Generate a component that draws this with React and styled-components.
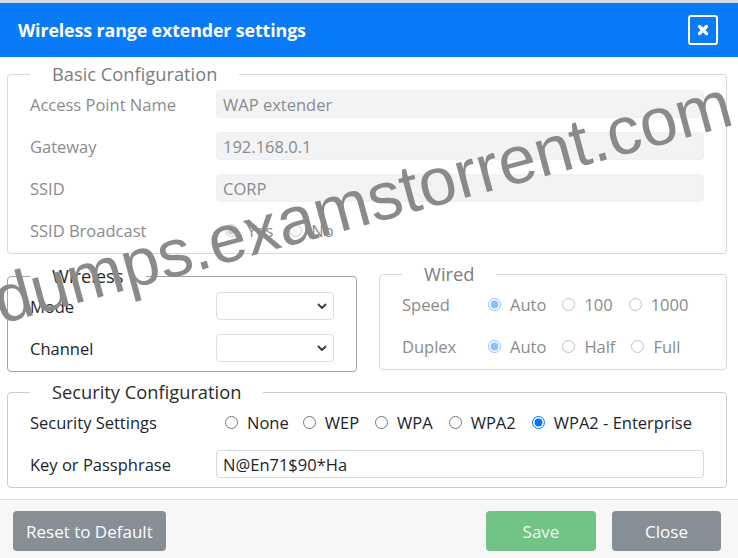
import React from 'react';
import styled, { createGlobalStyle } from 'styled-components';

const GlobalStyle = createGlobalStyle`
  html, body {
    margin: 0;
    padding: 0;
    background: #ffffff;
    overflow: hidden;
  }
  * {
    box-sizing: border-box;
  }
`;

const muted = '#8b8b8b';
const ink = '#212529';

function App() {
  return (
    <Page>
      <GlobalStyle />
      <TopStrip />
      <Header>
        <Title>Wireless range extender settings</Title>
        <CloseIcon aria-label="Close">
          <svg width="12" height="12" viewBox="0 0 12 12">
            <path
              d="M2.5 2.5 L9.5 9.5 M9.5 2.5 L2.5 9.5"
              stroke="#fff"
              strokeWidth="3.2"
              strokeLinecap="round"
            />
          </svg>
        </CloseIcon>
      </Header>

      <Body>
        <Fieldset disabled $border="#d8d8d8">
          <Legend $muted>Basic Configuration</Legend>
          <Row $labelWidth={186}>
            <Label $muted>Access Point Name</Label>
            <TextInput disabled defaultValue="WAP extender" />
          </Row>
          <Row $labelWidth={186}>
            <Label $muted>Gateway</Label>
            <TextInput disabled defaultValue="192.168.0.1" />
          </Row>
          <Row $labelWidth={186}>
            <Label $muted>SSID</Label>
            <TextInput disabled defaultValue="CORP" />
          </Row>
          <Row $labelWidth={186}>
            <Label $muted>SSID Broadcast</Label>
            <Options>
              <Option $muted>
                <Radio type="radio" name="broadcast" defaultChecked disabled />
                Yes
              </Option>
              <Option $muted>
                <Radio type="radio" name="broadcast" disabled />
                No
              </Option>
            </Options>
          </Row>
        </Fieldset>

        <Columns>
          <Fieldset $border="#a3a3a3">
            <Legend>Wireless</Legend>
            <Row $labelWidth={186}>
              <Label>Mode</Label>
              <Dropdown />
            </Row>
            <Row $labelWidth={186}>
              <Label>Channel</Label>
              <Dropdown />
            </Row>
          </Fieldset>

          <Fieldset $border="#d8d8d8" $lift>
            <Legend $muted>Wired</Legend>
            <Row $labelWidth={77}>
              <Label $muted>Speed</Label>
              <Options>
                <Option $muted>
                  <Radio type="radio" name="speed" defaultChecked $faded />
                  Auto
                </Option>
                <Option $muted>
                  <Radio type="radio" name="speed" $faded />
                  100
                </Option>
                <Option $muted>
                  <Radio type="radio" name="speed" $faded />
                  1000
                </Option>
              </Options>
            </Row>
            <Row $labelWidth={77}>
              <Label $muted>Duplex</Label>
              <Options>
                <Option $muted>
                  <Radio type="radio" name="duplex" defaultChecked $faded />
                  Auto
                </Option>
                <Option $muted>
                  <Radio type="radio" name="duplex" $faded />
                  Half
                </Option>
                <Option $muted>
                  <Radio type="radio" name="duplex" $faded />
                  Full
                </Option>
              </Options>
            </Row>
          </Fieldset>
        </Columns>

        <Fieldset $border="#cdcdcd" $gapAbove={11}>
          <Legend>Security Configuration</Legend>
          <Row $labelWidth={186}>
            <Label>Security Settings</Label>
            <Options>
              {['None', 'WEP', 'WPA', 'WPA2', 'WPA2 - Enterprise'].map((opt) => (
                <Option key={opt} $tight={opt === 'None'}>
                  <Radio
                    type="radio"
                    name="security"
                    defaultChecked={opt === 'WPA2 - Enterprise'}
                  />
                  {opt}
                </Option>
              ))}
            </Options>
          </Row>
          <Row $labelWidth={186}>
            <Label>Key or Passphrase</Label>
            <TextInput defaultValue="N@En71$90*Ha" />
          </Row>
        </Fieldset>
      </Body>

      <Footer>
        <Button $bg="#868e96">Reset to Default</Button>
        <FooterRight>
          <Button $bg="#71c386" $width={110} disabled>
            Save
          </Button>
          <Button $bg="#868e96" $width={109}>
            Close
          </Button>
        </FooterRight>
      </Footer>

      <Watermark>dumps.examstorrent.com</Watermark>
    </Page>
  );
}

function Dropdown() {
  return (
    <SelectWrap>
      <Select defaultValue="">
        <option value="" />
      </Select>
      <Chevron width="10" height="7" viewBox="0 0 10 7">
        <path
          d="M1.5 1.5 L5 5 L8.5 1.5"
          fill="none"
          stroke="#343a40"
          strokeWidth="1.8"
          strokeLinecap="round"
          strokeLinejoin="round"
        />
      </Chevron>
    </SelectWrap>
  );
}

const Page = styled.div`
  position: relative;
  width: 738px;
  height: 558px;
  display: flex;
  flex-direction: column;
  font-family: 'Open Sans', 'Noto Sans', sans-serif;
  font-size: 16.5px;
  color: ${ink};
  background: #fff;
  overflow: hidden;
`;

const TopStrip = styled.div`
  height: 3px;
  background: #d3dbe3;
`;

const Header = styled.header`
  height: 54px;
  background: #0a7bf8;
  display: flex;
  align-items: center;
  justify-content: space-between;
  padding: 0 20px 0 18px;
`;

const Title = styled.h1`
  margin: 0;
  font-size: 17.8px;
  font-weight: 700;
  color: #fff;
  letter-spacing: -0.1px;
`;

const CloseIcon = styled.button`
  width: 30px;
  height: 30px;
  padding: 0;
  border: 2px solid #fff;
  border-radius: 3px;
  background: transparent;
  display: flex;
  align-items: center;
  justify-content: center;
  cursor: pointer;
`;

const Body = styled.main`
  flex: 1;
  padding: 8px 11px 0 7px;
  display: flex;
  flex-direction: column;
  gap: 13px;
`;

const Fieldset = styled.fieldset`
  margin: ${({ $lift }) => ($lift ? '-2px 0 0' : '0')};
  margin-top: ${({ $gapAbove }) => ($gapAbove != null ? `${$gapAbove - 13}px` : undefined)};
  padding: 0 22px 2px;
  min-width: 0;
  border: 1px solid ${({ $border }) => $border};
  border-radius: 4px;
`;

const Legend = styled.legend`
  padding: 0 22px;
  font-size: 18.3px;
  line-height: 18px;
  color: ${({ $muted }) => ($muted ? '#7d7d7d' : '#2b2b2b')};
`;

const Columns = styled.div`
  display: grid;
  grid-template-columns: 350px 348px;
  gap: 22px;
  align-items: start;
`;

const Row = styled.div`
  display: grid;
  grid-template-columns: ${({ $labelWidth }) => $labelWidth}px 1fr;
  align-items: center;
  height: 42px;
`;

const Label = styled.span`
  color: ${({ $muted }) => ($muted ? muted : ink)};
  white-space: nowrap;
`;

const TextInput = styled.input`
  height: 28px;
  width: 100%;
  padding: 0 6px;
  border: 1px solid ${({ disabled }) => (disabled ? '#eef0f2' : '#d9dcdf')};
  border-radius: 4px;
  background: ${({ disabled }) => (disabled ? '#f2f3f5' : '#fff')};
  font: inherit;
  color: ${({ disabled }) => (disabled ? muted : ink)};
  outline: none;
`;

const SelectWrap = styled.div`
  position: relative;
  width: 118px;
`;

const Select = styled.select`
  appearance: none;
  width: 100%;
  height: 28px;
  border: 1px solid #dcdfe2;
  border-radius: 4px;
  background: #fff;
  font: inherit;
`;

const Chevron = styled.svg`
  position: absolute;
  right: 7px;
  top: 11px;
  pointer-events: none;
`;

const Options = styled.div`
  display: flex;
  align-items: center;
  padding-left: 9px;
`;

const Option = styled.label`
  display: inline-flex;
  align-items: center;
  gap: 9px;
  margin-right: ${({ $tight }) => ($tight ? '14px' : '16px')};
  color: ${({ $muted }) => ($muted ? muted : ink)};
  white-space: nowrap;
`;

const Radio = styled.input`
  width: 13px;
  height: 13px;
  margin: 0;
  opacity: ${({ $faded }) => ($faded ? 0.45 : 1)};
`;

const Footer = styled.footer`
  height: 59px;
  border-top: 1px solid #dee2e6;
  background: #f7f7f7;
  display: flex;
  align-items: center;
  justify-content: space-between;
  padding: 4px 17px 0 13px;
`;

const FooterRight = styled.div`
  display: flex;
  gap: 16px;
`;

const Button = styled.button`
  height: 40px;
  width: ${({ $width }) => ($width ? `${$width}px` : 'auto')};
  padding: 0 13px;
  border: none;
  border-radius: 4px;
  background: ${({ $bg }) => $bg};
  color: #fff;
  font: inherit;
  font-size: 17px;
  cursor: pointer;

  &:disabled {
    color: rgba(255, 255, 255, 0.92);
    cursor: default;
  }
`;

const Watermark = styled.div`
  position: absolute;
  left: 1px;
  top: 268px;
  font-family: 'Liberation Sans', Arial, sans-serif;
  font-size: 67.5px;
  line-height: 66px;
  color: #8a8a8a;
  white-space: nowrap;
  transform-origin: 0 56px;
  transform: rotate(-15.2deg);
  pointer-events: none;
`;

export default App;
